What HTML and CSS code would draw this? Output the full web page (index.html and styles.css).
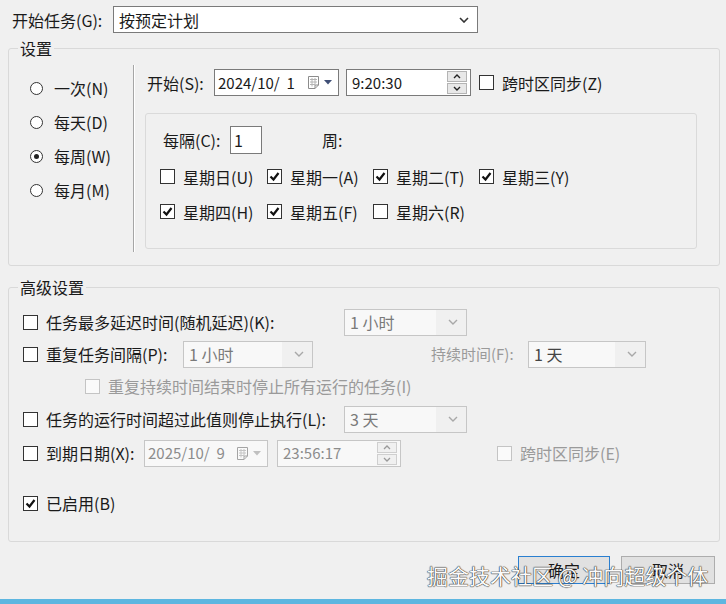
FILE: index.html
```html
<!DOCTYPE html>
<html lang="zh-CN">
<head>
    <meta charset="UTF-8">
    <title>新建触发器</title>
    <link rel="stylesheet" href="styles.css">
</head>
<body>
    <div class="dialog">
        <!-- 开始任务 -->
        <div class="row-top">
            <span class="top-lbl">开始任务(G):</span>
            <div class="select select-main">
                <span>按预定计划</span>
                <svg class="chev" width="10" height="6" viewBox="0 0 10 6"><polyline points="1,1 5,5 9,1" fill="none" stroke="#333" stroke-width="1.6"/></svg>
            </div>
        </div>

        <!-- 设置 -->
        <fieldset class="group">
            <legend>设置</legend>
            <div class="settings-body">
                <div class="freq">
                    <div class="radio-item"><span class="radio"></span>一次(N)</div>
                    <div class="radio-item"><span class="radio"></span>每天(D)</div>
                    <div class="radio-item"><span class="radio on"></span>每周(W)</div>
                    <div class="radio-item"><span class="radio"></span>每月(M)</div>
                </div>
                <div class="sched">
                    <div class="start-row">
                        <span class="start-lbl">开始(S):</span>
                        <div class="date">
                            <span class="val">2024/10/  1</span>
                            <svg class="cal" width="13" height="15" viewBox="0 0 13 15"><path d="M1.5 1.5h10v8.5l-3.5 3.5h-6.5z" fill="#fff" stroke="#8c8c8c"/><path d="M3 4.5h7M3 7h7M3 9.5h5M5 3v8.5M8 3v6" stroke="#b4b4b4"/><path d="M8 13.5v-3.5h3.5" fill="none" stroke="#8c8c8c"/></svg>
                            <svg width="8" height="5" viewBox="0 0 8 5"><path d="M0 0h8l-4 4.5z" fill="#3f4f76"/></svg>
                        </div>
                        <div class="time">
                            <span class="val">9:20:30</span>
                            <div class="spin">
                                <span><svg width="8" height="5" viewBox="0 0 8 5"><polyline points="1,4 4,1 7,4" fill="none" stroke="#222" stroke-width="1.4"/></svg></span>
                                <span><svg width="8" height="5" viewBox="0 0 8 5"><polyline points="1,1 4,4 7,1" fill="none" stroke="#222" stroke-width="1.4"/></svg></span>
                            </div>
                        </div>
                        <div class="check-item tz"><span class="cb"></span>跨时区同步(Z)</div>
                    </div>

                    <div class="week-box">
                        <div class="every-row">
                            <span class="every-lbl">每隔(C):</span>
                            <div class="num">1</div>
                            <span class="unit">周:</span>
                        </div>
                        <div class="days">
                            <div class="check-item"><span class="cb"></span>星期日(U)</div>
                            <div class="check-item"><span class="cb"><svg viewBox="0 0 13 13"><path d="M2.5 6.5l3 3 5-6.5" fill="none" stroke="#111" stroke-width="2.2"/></svg></span>星期一(A)</div>
                            <div class="check-item"><span class="cb"><svg viewBox="0 0 13 13"><path d="M2.5 6.5l3 3 5-6.5" fill="none" stroke="#111" stroke-width="2.2"/></svg></span>星期二(T)</div>
                            <div class="check-item"><span class="cb"><svg viewBox="0 0 13 13"><path d="M2.5 6.5l3 3 5-6.5" fill="none" stroke="#111" stroke-width="2.2"/></svg></span>星期三(Y)</div>
                            <div class="check-item"><span class="cb"><svg viewBox="0 0 13 13"><path d="M2.5 6.5l3 3 5-6.5" fill="none" stroke="#111" stroke-width="2.2"/></svg></span>星期四(H)</div>
                            <div class="check-item"><span class="cb"><svg viewBox="0 0 13 13"><path d="M2.5 6.5l3 3 5-6.5" fill="none" stroke="#111" stroke-width="2.2"/></svg></span>星期五(F)</div>
                            <div class="check-item"><span class="cb"></span>星期六(R)</div>
                        </div>
                    </div>
                </div>
            </div>
        </fieldset>

        <!-- 高级设置 -->
        <fieldset class="group advanced">
            <legend>高级设置</legend>
            <div class="adv-body">
                <div class="adv-row">
                    <span class="cb"></span>
                    <span class="adv-lbl w-long">任务最多延迟时间(随机延迟)(K):</span>
                    <div class="select off w-mid"><span>1 小时</span><svg class="chev" width="10" height="6" viewBox="0 0 10 6"><polyline points="1,1 5,5 9,1" fill="none" stroke="#a8a8a8" stroke-width="1.4"/></svg></div>
                </div>
                <div class="adv-row">
                    <span class="cb"></span>
                    <span class="adv-lbl w-repeat">重复任务间隔(P):</span>
                    <div class="select off w-repeat-sel"><span>1 小时</span><svg class="chev" width="10" height="6" viewBox="0 0 10 6"><polyline points="1,1 5,5 9,1" fill="none" stroke="#a8a8a8" stroke-width="1.4"/></svg></div>
                    <span class="adv-lbl dim w-dur">持续时间(F):</span>
                    <div class="select off w-dur-sel"><span class="dark">1 天</span><svg class="chev" width="10" height="6" viewBox="0 0 10 6"><polyline points="1,1 5,5 9,1" fill="none" stroke="#a8a8a8" stroke-width="1.4"/></svg></div>
                </div>
                <div class="adv-row indent">
                    <span class="cb off"></span>
                    <span class="adv-lbl dim">重复持续时间结束时停止所有运行的任务(I)</span>
                </div>
                <div class="adv-row tall">
                    <span class="cb"></span>
                    <span class="adv-lbl w-long">任务的运行时间超过此值则停止执行(L):</span>
                    <div class="select off w-mid"><span>3 天</span><svg class="chev" width="10" height="6" viewBox="0 0 10 6"><polyline points="1,1 5,5 9,1" fill="none" stroke="#a8a8a8" stroke-width="1.4"/></svg></div>
                </div>
                <div class="adv-row tall">
                    <span class="cb"></span>
                    <span class="adv-lbl w-expire">到期日期(X):</span>
                    <div class="date off">
                        <span class="val">2025/10/  9</span>
                        <svg class="cal" width="13" height="15" viewBox="0 0 13 15"><path d="M1.5 1.5h10v8.5l-3.5 3.5h-6.5z" fill="#fafafa" stroke="#a4a4a4"/><path d="M3 4.5h7M3 7h7M3 9.5h5M5 3v8.5M8 3v6" stroke="#c4c4c4"/><path d="M8 13.5v-3.5h3.5" fill="none" stroke="#a4a4a4"/></svg>
                        <svg width="8" height="5" viewBox="0 0 8 5"><path d="M0 0h8l-4 4.5z" fill="#c0c0c0"/></svg>
                    </div>
                    <div class="time off">
                        <span class="val">23:56:17</span>
                        <div class="spin">
                            <span><svg width="8" height="5" viewBox="0 0 8 5"><polyline points="1,4 4,1 7,4" fill="none" stroke="#9a9a9a" stroke-width="1.3"/></svg></span>
                            <span><svg width="8" height="5" viewBox="0 0 8 5"><polyline points="1,1 4,4 7,1" fill="none" stroke="#9a9a9a" stroke-width="1.3"/></svg></span>
                        </div>
                    </div>
                    <div class="check-item dim tz-off"><span class="cb off"></span>跨时区同步(E)</div>
                </div>
                <div class="adv-row enabled">
                    <span class="cb"><svg viewBox="0 0 13 13"><path d="M2.5 6.5l3 3 5-6.5" fill="none" stroke="#111" stroke-width="2.2"/></svg></span>
                    <span class="adv-lbl">已启用(B)</span>
                </div>
            </div>
        </fieldset>

        <div class="buttons">
            <button class="btn primary">确定</button>
            <button class="btn">取消</button>
        </div>
    </div>
    <div class="taskbar"></div>

    <div class="watermark">掘金技术社区 @ 冲向超级个体</div>
</body>
</html>
```

FILE: styles.css
```css
/* Dasar halaman */
body {
    margin: 0;
    width: 726px;
    height: 604px;
    overflow: hidden;
    position: relative;
    background: #f0f0f0;
    font-family: "Noto Sans CJK SC", "Noto Sans", sans-serif;
    font-size: 16px;
    line-height: 18px;
    color: #1a1a1a;
}

.dialog {
    padding: 6px 6px 0 8px;
}

/* Baris atas */
.row-top {
    display: flex;
    align-items: center;
    height: 27px;
}

.top-lbl {
    width: 101px;
    margin-left: 4px;
}

.select {
    display: flex;
    align-items: center;
    justify-content: space-between;
    box-sizing: border-box;
    height: 27px;
    padding: 0 8px 0 5px;
    background: #fff;
    border: 1px solid #7a7a7a;
}

.select-main {
    width: 365px;
}

.select.off {
    background: linear-gradient(to right, #f8f8f8 calc(100% - 30px), #f0f0f0 calc(100% - 30px));
    border-color: #c6c6c6;
    color: #7a7a7a;
}

.select .dark {
    color: #444;
}

/* Group box */
.group {
    margin: 6px 0 0 0;
    padding: 0;
    border: 1px solid #d9d9d9;
    border-radius: 3px;
}

.group legend {
    margin-left: 9px;
    padding: 0 2px;
    line-height: 18px;
}

.settings-body {
    display: flex;
}

.freq {
    box-sizing: border-box;
    width: 125px;
    height: 187px;
    margin-top: 8px;
    padding: 6px 0 0 21px;
    border-right: 1px solid #a6a6a6;
    box-shadow: 1px 0 0 #fff;
}

.radio-item {
    display: flex;
    align-items: center;
    height: 34px;
}

.radio {
    position: relative;
    box-sizing: border-box;
    width: 13px;
    height: 13px;
    margin-right: 11px;
    border: 1px solid #333;
    border-radius: 50%;
    background: #fff;
}

.radio.on::after {
    content: "";
    position: absolute;
    left: 3px;
    top: 3px;
    width: 5px;
    height: 5px;
    border-radius: 50%;
    background: #222;
}

.sched {
    padding: 12px 0 16px 13px;
}

.start-row {
    display: flex;
    align-items: center;
    height: 27px;
}

.start-lbl {
    width: 67px;
}

.date,
.time {
    display: flex;
    align-items: center;
    box-sizing: border-box;
    height: 27px;
    padding: 0 6px 0 3px;
    background: #fff;
    border: 1px solid #7a7a7a;
    font-size: 15px;
}

.date {
    width: 125px;
}

.date .val,
.time .val {
    flex: 1;
    white-space: pre;
}

.date .cal {
    margin-right: 4px;
}

.time {
    width: 125px;
    margin-left: 7px;
    padding: 0 3px 0 5px;
}

.spin {
    display: flex;
    flex-direction: column;
    gap: 1px;
}

.spin span {
    display: flex;
    align-items: center;
    justify-content: center;
    box-sizing: border-box;
    width: 20px;
    height: 11px;
    background: #e8e8e8;
    border: 1px solid #b4b4b4;
}

.date.off,
.time.off {
    background: #f8f8f8;
    border-color: #c6c6c6;
    color: #8c8c8c;
}

.time.off .spin span {
    background: #f0f0f0;
    border-color: #cfcfcf;
}

/* Checkbox */
.check-item {
    display: flex;
    align-items: center;
}

.cb {
    display: inline-flex;
    flex: none;
    box-sizing: border-box;
    width: 15px;
    height: 15px;
    margin-right: 8px;
    border: 1px solid #333;
    background: #fff;
}

.cb svg {
    width: 13px;
    height: 13px;
}

.cb.off {
    border-color: #c4c4c4;
    background: #fafafa;
}

.tz {
    margin-left: 8px;
}

.week-box {
    box-sizing: border-box;
    width: 552px;
    height: 136px;
    margin: 17px 0 0 -2px;
    padding: 12px 0 0 17px;
    border: 1px solid #dadada;
    border-radius: 3px;
}

.every-row {
    display: flex;
    align-items: center;
    height: 28px;
}

.every-lbl {
    width: 67px;
}

.num {
    box-sizing: border-box;
    width: 32px;
    height: 28px;
    padding: 4px 0 0 3px;
    background: #fff;
    border: 1px solid #7a7a7a;
}

.unit {
    margin-left: 60px;
}

.days {
    display: grid;
    grid-template-columns: 107px 106px 106px 106px;
    grid-auto-rows: 35px;
    margin: 5px 0 0 -3px;
}

/* Advanced settings */
.advanced {
    margin-top: 12px;
}

.adv-body {
    padding: 10px 0 22px 14px;
}

.adv-row {
    display: flex;
    align-items: center;
    height: 32px;
}

.adv-row.tall {
    height: 34px;
}

.adv-lbl {
    flex: none;
}

.dim {
    color: #9a9a9a;
}

.w-long { width: 298px; }
.w-mid { width: 123px; }
.w-repeat { width: 137px; }
.w-repeat-sel { width: 130px; }
.w-dur { width: 97px; margin-left: 118px; font-size: 15px; }
.w-dur-sel { width: 118px; }
.w-expire { width: 98px; }

.indent {
    padding-left: 62px;
}

.adv-row .date {
    width: 124px;
}

.adv-row .time {
    width: 124px;
    margin-left: 9px;
}

.tz-off {
    margin-left: 96px;
}

.enabled {
    margin-top: 17px;
}

/* Tombol */
.buttons {
    display: flex;
    justify-content: flex-end;
    gap: 11px;
    margin-top: 14px;
    padding-right: 5px;
}

.btn {
    height: 28px;
    width: 94px;
    font-family: inherit;
    font-size: 16px;
    color: #1a1a1a;
    background: #e1e1e1;
    border: 1px solid #adadad;
}

.btn.primary {
    width: 92px;
    border-color: #2a7fd0;
}

.taskbar {
    height: 6px;
    margin-top: 15px;
    background: #5db6e0;
}

.watermark {
    position: absolute;
    left: 427px;
    top: 562px;
    font-size: 21px;
    line-height: 26px;
    color: #fbfbfb;
    text-shadow: 0 0 1px #333, 0 0 1px #333, 0 0 1px #333;
    white-space: nowrap;
}
```
